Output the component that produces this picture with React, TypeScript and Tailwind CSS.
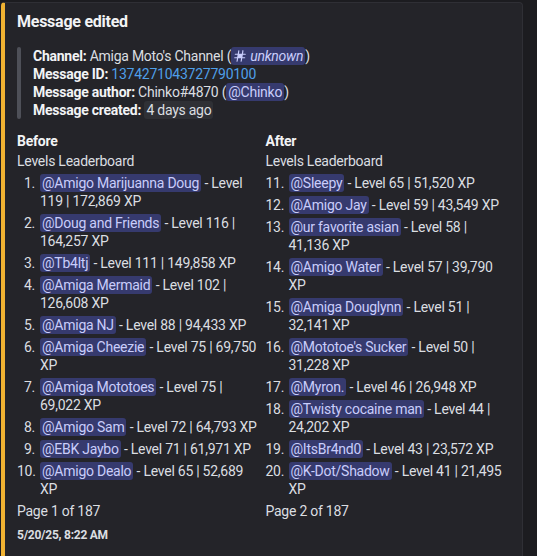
import React from "react";

const Mention = ({ children }: { children: React.ReactNode }) => (
  <span className="rounded-[3px] bg-[#363a6e] px-[2px] py-[1px] text-[#c9cdfb]">{children}</span>
);

type Item = { n: number; name: string; rest: string; wrap?: string };

const before: Item[] = [
  { n: 1, name: "@Amigo Marijuanna Doug", rest: " - Level", wrap: "119 | 172,869 XP" },
  { n: 2, name: "@Doug and Friends", rest: " - Level 116 |", wrap: "164,257 XP" },
  { n: 3, name: "@Tb4ltj", rest: " - Level 111 | 149,858 XP" },
  { n: 4, name: "@Amiga Mermaid", rest: " - Level 102 |", wrap: "126,608 XP" },
  { n: 5, name: "@Amiga NJ", rest: " - Level 88 | 94,433 XP" },
  { n: 6, name: "@Amiga Cheezie", rest: " - Level 75 | 69,750", wrap: "XP" },
  { n: 7, name: "@Amiga Mototoes", rest: " - Level 75 |", wrap: "69,022 XP" },
  { n: 8, name: "@Amigo Sam", rest: " - Level 72 | 64,793 XP" },
  { n: 9, name: "@EBK Jaybo", rest: " - Level 71 | 61,971 XP" },
  { n: 10, name: "@Amigo Dealo", rest: " - Level 65 | 52,689", wrap: "XP" },
];

const after: Item[] = [
  { n: 11, name: "@Sleepy", rest: " - Level 65 | 51,520 XP" },
  { n: 12, name: "@Amigo Jay", rest: " - Level 59 | 43,549 XP" },
  { n: 13, name: "@ur favorite asian", rest: " - Level 58 |", wrap: "41,136 XP" },
  { n: 14, name: "@Amigo Water", rest: " - Level 57 | 39,790", wrap: "XP" },
  { n: 15, name: "@Amiga Douglynn", rest: " - Level 51 |", wrap: "32,141 XP" },
  { n: 16, name: "@Mototoe's Sucker", rest: " - Level 50 |", wrap: "31,228 XP" },
  { n: 17, name: "@Myron.", rest: " - Level 46 | 26,948 XP" },
  { n: 18, name: "@Twisty cocaine man", rest: " - Level 44 |", wrap: "24,202 XP" },
  { n: 19, name: "@ItsBr4nd0", rest: " - Level 43 | 23,572 XP" },
  { n: 20, name: "@K-Dot/Shadow", rest: " - Level 41 | 21,495", wrap: "XP" },
];

const Field = ({ title, items, page }: { title: string; items: Item[]; page: string }) => (
  <div className="min-w-0">
    <div className="mb-[2px] font-bold text-[#f2f3f5]">{title}</div>
    <div>Levels Leaderboard</div>
    <ol className="mt-[4px]">
      {items.map((it) => (
        <li key={it.n} className="mb-[4px] flex">
          <span className="w-[23px] shrink-0 whitespace-nowrap pr-[5px] text-right">{it.n}.</span>
          <span className="min-w-0 whitespace-nowrap">
            <Mention>{it.name}</Mention>
            {it.rest}
            {it.wrap && (
              <>
                <br />
                {it.wrap}
              </>
            )}
          </span>
        </li>
      ))}
    </ol>
    <div>{page}</div>
  </div>
);

export default function App() {
  return (
    <div className="min-h-[556px] bg-[#1c1c20] pl-[1px] pt-[2px] font-['Roboto',sans-serif] text-[14px] leading-[18px] tracking-[-0.25px] text-[#dbdee1]">
      <div className="w-[522px] rounded-[4px] border border-[#2f2f35] border-l-4 border-l-[#f0b232] bg-[#242429] pb-4 pl-[12px] pr-4 pt-2">
        <div className="text-[16px] font-bold leading-[22px] text-[#f2f3f5]">Message edited</div>
        <div className="mt-[14px] flex">
          <div className="w-[4px] shrink-0 rounded bg-[#4e5058]" />
          <div className="pl-3">
            <div>
              <span className="font-bold text-[#f2f3f5]">Channel:</span> Amiga Moto's Channel (
              <span className="rounded-[3px] bg-[#363a6e] px-[2px] py-[1px] text-[#c9cdfb]">
                <svg className="mr-[3px] inline-block align-[-2px]" width="14" height="14" viewBox="0 0 24 24" fill="currentColor">
                  <path d="M10.99 3.16A1 1 0 1 0 9 2.84L8.15 8H4a1 1 0 0 0 0 2h3.82l-.67 4H3a1 1 0 1 0 0 2h3.82l-.8 4.84a1 1 0 0 0 1.97.32L8.85 16h4.97l-.8 4.84a1 1 0 0 0 1.97.32l.86-5.16H20a1 1 0 1 0 0-2h-3.82l.67-4H21a1 1 0 1 0 0-2h-3.82l.8-4.84a1 1 0 1 0-1.97-.32L15.15 8h-4.97l.8-4.84ZM14.15 14l.67-4H9.85l-.67 4h4.97Z" />
                </svg>
                <i>unknown</i>
              </span>
              )
            </div>
            <div>
              <span className="font-bold text-[#f2f3f5]">Message ID:</span>{" "}
              <span className="text-[#4f9fe8]">1374271043727790100</span>
            </div>
            <div>
              <span className="font-bold text-[#f2f3f5]">Message author:</span> Chinko#4870 (<Mention>@Chinko</Mention>)
            </div>
            <div>
              <span className="font-bold text-[#f2f3f5]">Message created:</span>{" "}
              <span className="rounded-[3px] bg-[#2f3035] px-[2px] py-[1px]">4 days ago</span>
            </div>
          </div>
        </div>
        <div className="mt-[13px] grid grid-cols-2 gap-2">
          <Field title="Before" items={before} page="Page 1 of 187" />
          <Field title="After" items={after} page="Page 2 of 187" />
        </div>
        <div className="mt-[7px] text-[12px] font-bold leading-4 text-[#dbdee1]">5/20/25, 8:22 AM</div>
      </div>
    </div>
  );
}
